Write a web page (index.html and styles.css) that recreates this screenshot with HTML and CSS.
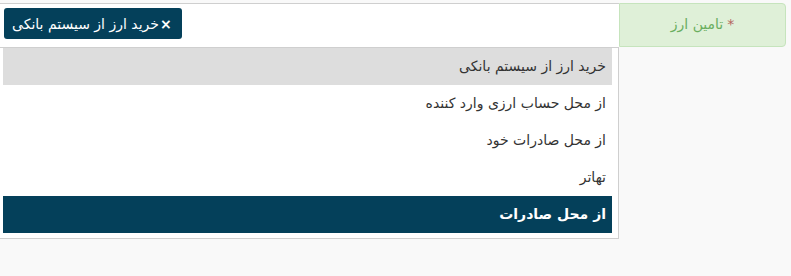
FILE: index.html
```html
<!DOCTYPE html>
<html lang="fa" dir="rtl">
<head>
<meta charset="utf-8">
<link rel="stylesheet" href="styles.css">
</head>
<body>
	<div class="form-group">
		<span class="addon"><span class="req">*</span> تامین ارز</span>
		<div class="select-box">
			<span class="tag"><span class="tag-remove">×</span>خرید ارز از سیستم بانکی</span>
		</div>
		<ul class="dropdown">
			<li class="option hover">خرید ارز از سیستم بانکی</li>
			<li class="option">از محل حساب ارزی وارد کننده</li>
			<li class="option">از محل صادرات خود</li>
			<li class="option">تهاتر</li>
			<li class="option selected">از محل صادرات</li>
		</ul>
	</div>
</body>
</html>
```

FILE: styles.css
```css
body{
	margin: 0;
	background-color: #f9f9f9;
	font-family: "DejaVu Sans", sans-serif;
	font-size: 14px;
	color: #333;
}

.form-group{
	display: grid;
	grid-template-columns: 167px 1fr;
	grid-template-rows: 45px auto;
	padding: 3px 5px 0 0;
}

.addon{
	grid-column: 1;
	grid-row: 1;
	display: flex;
	align-items: center;
	justify-content: center;
	background-color: #dff0d8;
	border: 1px solid #c6e4bd;
	border-radius: 0 4px 4px 0;
	color: #6aae5f;
	padding-bottom: 2px;
	box-sizing: border-box;
	height: 44px;
}

.req{
	color: #b5655e;
	margin-left: 4px;
}

.select-box{
	grid-column: 2;
	grid-row: 1;
	background-color: #fff;
	border-top: 1px solid #cfcfcf;
	border-bottom: 1px solid #cfcfcf;
	display: flex;
	align-items: flex-start;
	justify-content: flex-end;
}

.tag{
	margin: 4px 0 0 4px;
	height: 31px;
	display: flex;
	align-items: center;
	padding: 0 10px 0 8px;
	background-color: #04405a;
	color: #fff;
	border-radius: 3px;
}

.tag-remove{
	font-weight: bold;
	margin-left: 1px;
}

.dropdown{
	grid-column: 2;
	grid-row: 2;
	margin: 0;
	padding: 0 6px 5px 3px;
	list-style: none;
	background-color: #fff;
	border: 1px solid #cfcfcf;
	border-top: none;
	border-left: none;
}

.option{
	height: 37px;
	line-height: 36px;
	padding: 0 6px;
}

.option.hover{
	background-color: #dddddd;
}

.option.selected{
	background-color: #04405a;
	color: #fff;
	font-weight: bold;
}
```
